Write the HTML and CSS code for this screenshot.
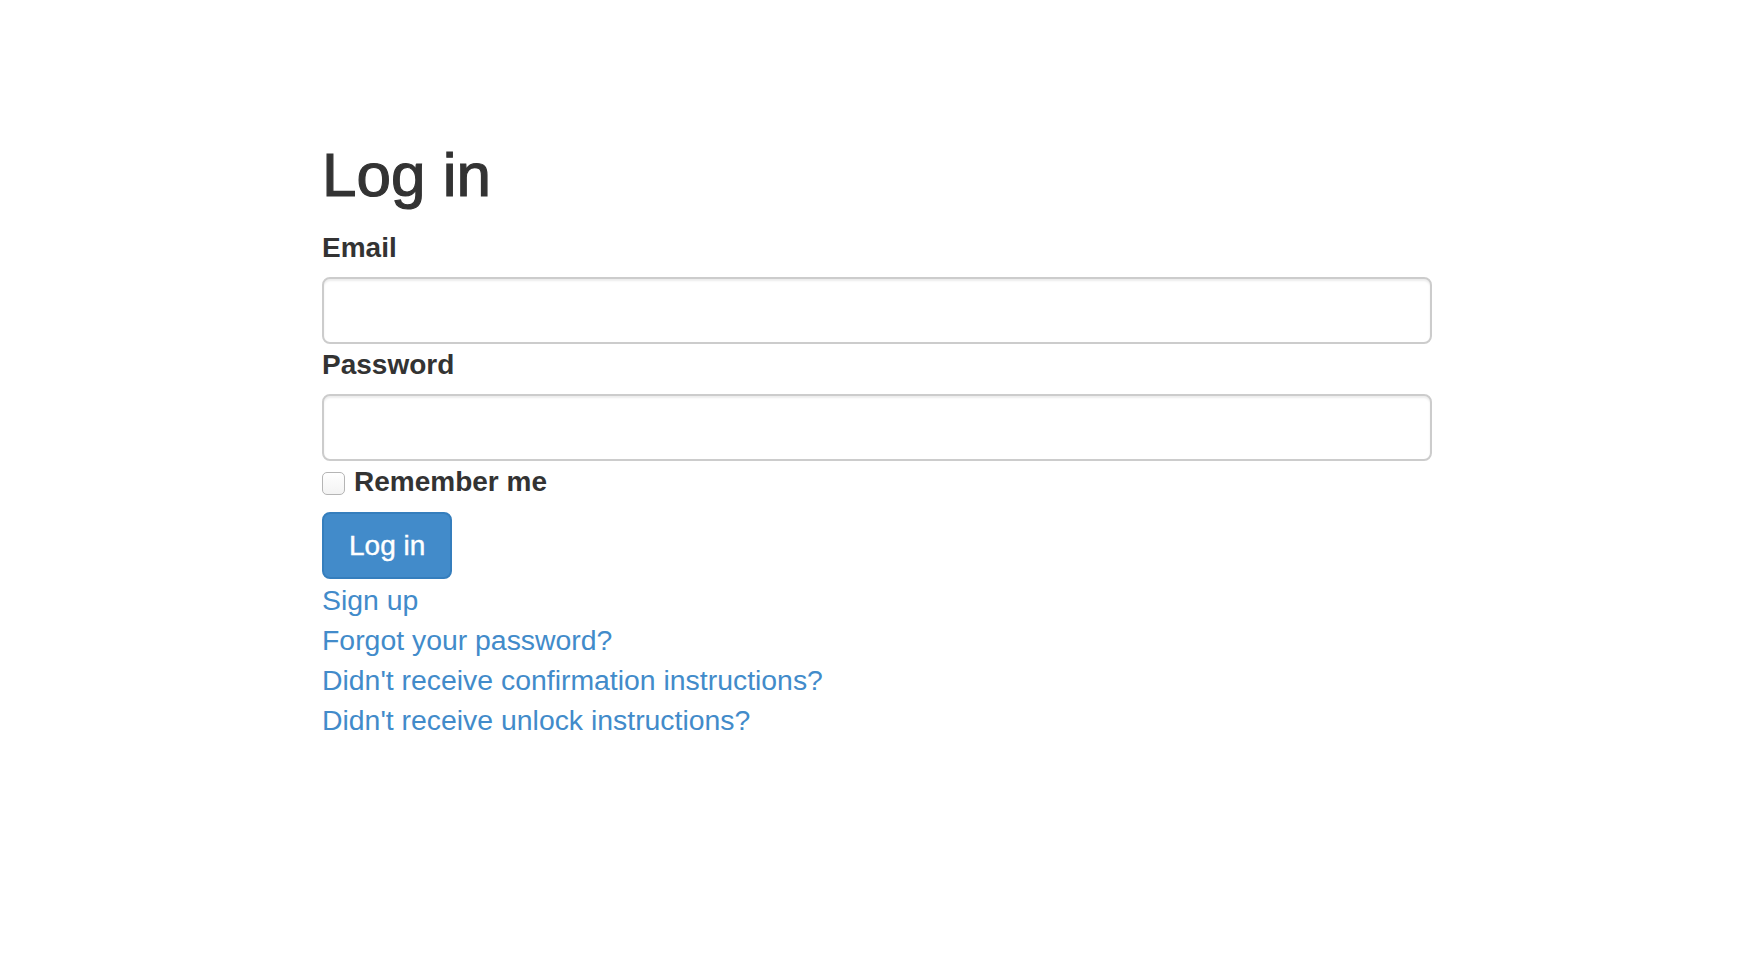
FILE: index.html
```html
<!DOCTYPE html>
<html lang="en">
<head>
    <meta charset="UTF-8">
    <meta name="viewport" content="width=device-width, initial-scale=1.0">
    <title>Log in</title>
    <link rel="stylesheet" href="styles.css">
</head>
<body>
    <main class="container">
        <h1>Log in</h1>

        <form class="loginForm" action="#" method="post">
            <div class="field">
                <label for="user_email">Email</label>
                <input type="email" id="user_email" name="user[email]">
            </div>

            <div class="field">
                <label for="user_password">Password</label>
                <input type="password" id="user_password" name="user[password]">
            </div>

            <div class="remember">
                <input type="checkbox" id="user_remember_me" name="user[remember_me]">
                <label for="user_remember_me">Remember me</label>
            </div>

            <div class="actions">
                <button type="submit" class="btn">Log in</button>
            </div>
        </form>

        <!-- devise shared links -->
        <div class="links">
            <a href="#">Sign up</a><br>
            <a href="#">Forgot your password?</a><br>
            <a href="#">Didn't receive confirmation instructions?</a><br>
            <a href="#">Didn't receive unlock instructions?</a><br>
        </div>
    </main>
</body>
</html>
```

FILE: styles.css
```css
body{
    margin: 0;
    font-family: "Liberation Sans", Arial, Helvetica, sans-serif;
    color: #333;
    background: #fff;
}

.container{
    width: 1110px;
    margin: 0 0 0 322px;
    padding-top: 141px;
}

h1{
    margin: 0 0 20px;
    font-size: 62px;
    font-weight: 500;
    line-height: 68px;
    -webkit-text-stroke: 1.2px #333;
}

.field{
    margin-bottom: 2px;
}

label{
    display: block;
    font-size: 28px;
    font-weight: bold;
    line-height: 38px;
    margin-bottom: 10px;
}

.field input{
    display: block;
    box-sizing: border-box;
    width: 100%;
    height: 67px;
    padding: 10px 20px;
    font-size: 26px;
    font-family: inherit;
    border: 2px solid #ccc;
    border-radius: 8px;
    box-shadow: inset 0 2px 2px rgba(0, 0, 0, 0.075);
    background: #fff;
    outline: none;
}

.remember{
    display: flex;
    align-items: center;
    gap: 9px;
    margin-bottom: 11px;
}

.remember label{
    margin: 0;
}

.remember input{
    appearance: none;
    -webkit-appearance: none;
    margin: 3px 0 0;
    width: 23px;
    height: 23px;
    border: 1px solid #b5b5b5;
    border-radius: 5px;
    background: linear-gradient(#fff, #f3f3f3);
}

.btn{
    box-sizing: border-box;
    height: 67px;
    padding: 0 25px;
    font-family: inherit;
    font-size: 28px;
    color: #fff;
    background: #428bca;
    border: 2px solid #357ebd;
    border-radius: 8px;
    cursor: pointer;
    -webkit-text-stroke: 0.4px #fff;
}

.links{
    font-size: 28.4px;
    line-height: 40px;
    margin-top: 1px;
}

.links a{
    color: #428bca;
    text-decoration: none;
}
```
